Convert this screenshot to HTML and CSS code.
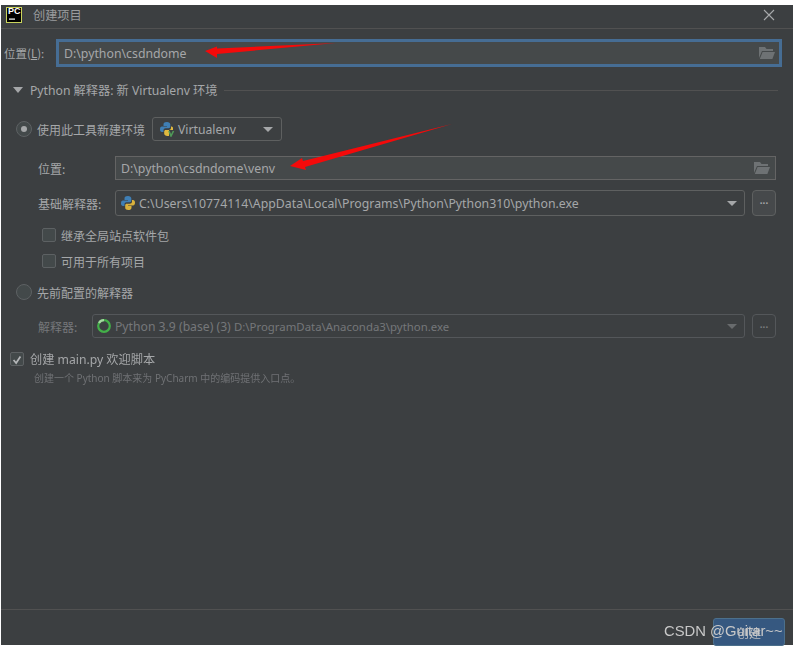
FILE: index.html
```html
<!DOCTYPE html>
<html lang="zh-CN">
  <head>
    <meta charset="UTF-8" />
    <title>创建项目</title>
    <link rel="stylesheet" href="styles.css">
  </head>
  <body>
    <div class="dialog">
      <div class="titlebar">
        <svg class="pc-logo" width="16" height="16" viewBox="0 0 16 16">
          <rect x="0.5" y="0.5" width="15" height="15" fill="#000" stroke="#c9d45c"></rect>
          <rect x="3" y="11.5" width="6" height="1.2" fill="#fff"></rect>
        </svg>
        <span class="pc-mark">PC</span>
        <span class="title">创建项目</span>
        <svg class="close" width="12" height="12" viewBox="0 0 12 12">
          <path d="M1 1 L11 11 M11 1 L1 11" stroke="#a8aaac" stroke-width="1.1" fill="none"></path>
        </svg>
      </div>

      <div class="content">
        <div class="row row-location">
          <label class="location-label">位置(<u>L</u>):</label>
          <div class="field field-focus">
            <span>D:\python\csdndome</span>
            <svg class="folder" width="16" height="13" viewBox="0 0 16 13">
              <path d="M0 0 H6 L7.5 2 H14 V4 H3 L0 11 Z" fill="#6e7274"></path>
              <path d="M3.6 5 H16 L13.4 12 H0.8 Z" fill="#6e7274"></path>
            </svg>
          </div>
        </div>

        <div class="section">
          <span class="triangle"></span>
          <span>Python 解释器: 新 Virtualenv 环境</span>
          <span class="section-line"></span>
        </div>

        <div class="row row-env">
          <span class="radio radio-on"></span>
          <span class="radio-text">使用此工具新建环境</span>
          <div class="select select-small">
            <svg class="py-icon" width="16" height="16" viewBox="0 0 16 16">
              <path d="M8 1 C5 1 4.5 2 4.5 3.5 V5 H8 V5.6 H3 C1.5 5.6 1 7 1 8.3 C1 10 1.7 11 3 11 H4.5 V9.3 C4.5 8 5.4 7.3 6.6 7.3 H9.6 C10.6 7.3 11.3 6.6 11.3 5.6 V3.3 C11.3 2 10 1 8 1 Z" fill="#3f7fb5"></path>
              <path d="M12 5.5 V7 C12 8.3 11 9 9.8 9 H6.8 C5.8 9 5.2 9.7 5.2 10.6 V12.8 C5.2 14 6.5 15 8.3 15 H10 V9 H14 V7 C14 6 13.2 5.5 12 5.5 Z" fill="#e0b93f"></path>
              <path d="M10 10 L12 15 L14.5 10" stroke="#4f9a58" stroke-width="1.6" fill="none"></path>
            </svg>
            <span>Virtualenv</span>
            <span class="arrow"></span>
          </div>
        </div>

        <div class="row row-venv">
          <label class="form-label">位置:</label>
          <div class="field field-wide">
            <span>D:\python\csdndome\venv</span>
            <svg class="folder" width="16" height="13" viewBox="0 0 16 13">
              <path d="M0 0 H6 L7.5 2 H14 V4 H3 L0 11 Z" fill="#6e7274"></path>
              <path d="M3.6 5 H16 L13.4 12 H0.8 Z" fill="#6e7274"></path>
            </svg>
          </div>
        </div>

        <div class="row row-base">
          <label class="form-label">基础解释器:</label>
          <div class="select select-grow">
            <svg class="py-icon" width="16" height="16" viewBox="0 0 16 16">
              <path d="M8 1 C5 1 4.5 2 4.5 3.5 V5 H8 V5.6 H3 C1.5 5.6 1 7 1 8.3 C1 10 1.7 11 3 11 H4.5 V9.3 C4.5 8 5.4 7.3 6.6 7.3 H9.6 C10.6 7.3 11.3 6.6 11.3 5.6 V3.3 C11.3 2 10 1 8 1 Z" fill="#3f7fb5"></path>
              <path d="M12 5 V6.7 C12 8 11 8.7 9.8 8.7 H6.8 C5.8 8.7 5.2 9.4 5.2 10.3 V12.7 C5.2 14 6.5 15 8.3 15 C10 15 11.5 14.4 11.5 12.7 V11 H8 V10.4 H13 C14.5 10.4 15 9 15 7.7 C15 6 14.3 5 13 5 Z" fill="#d9b13c"></path>
            </svg>
            <span>C:\Users\10774114\AppData\Local\Programs\Python\Python310\python.exe</span>
            <span class="arrow arrow-end"></span>
          </div>
          <div class="more">...</div>
        </div>

        <div class="row row-check-a">
          <span class="checkbox"></span>
          <span>继承全局站点软件包</span>
        </div>
        <div class="row row-check-b">
          <span class="checkbox"></span>
          <span>可用于所有项目</span>
        </div>

        <div class="row row-existing">
          <span class="radio"></span>
          <span class="radio-text">先前配置的解释器</span>
        </div>

        <div class="row row-interp">
          <label class="form-label form-label-short muted">解释器:</label>
          <div class="select select-grow select-off muted">
            <svg class="ring" width="16" height="16" viewBox="0 0 16 16">
              <circle cx="8" cy="8" r="5.8" fill="none" stroke="#43b049" stroke-width="2.2"></circle>
              <path d="M3 5 A5.8 5.8 0 0 1 8 2.2" fill="none" stroke="#a5d6a0" stroke-width="2.2"></path>
            </svg>
            <span>Python 3.9 (base) (3) <span class="path-small">D:\ProgramData\Anaconda3\python.exe</span></span>
            <span class="arrow arrow-end arrow-off"></span>
          </div>
          <div class="more more-off">...</div>
        </div>

        <div class="row row-main">
          <span class="checkbox checkbox-on">
            <svg width="14" height="14" viewBox="0 0 14 14">
              <path d="M3 7 L6 10.5 L11 3" stroke="#b4b6b8" stroke-width="2" fill="none"></path>
            </svg>
          </span>
          <span>创建 main.py 欢迎脚本</span>
        </div>
        <p class="hint">创建一个 Python 脚本来为 PyCharm 中的编码提供入口点。</p>
      </div>

      <div class="footer">
        <button class="create">创建</button>
      </div>
    </div>

    <!-- red arrows and watermark drawn over the screenshot -->
    <svg class="arrows" width="801" height="647" viewBox="0 0 801 647">
      <path d="M205 51 L217 46.5 L217 48.5 L336 43 L217 54 L217 58 Z" fill="#f40a0a"></path>
      <path d="M290 166 L302 158 L303 161 L452 124 L305 167 L306 170 Z" fill="#f40a0a"></path>
    </svg>
    <div class="watermark">CSDN @Guitar~~</div>
  </body>
</html>
```

FILE: styles.css
```css
* {
  box-sizing: border-box;
}
body {
  margin: 0;
  height: 647px;
  padding: 5px 8px 2px 1px;
  background: #fff;
  color: #a5a7a9;
  font-family: "Noto Sans CJK SC", "Noto Sans", sans-serif;
  font-size: 12px;
  overflow: hidden;
}
.dialog {
  display: flex;
  flex-direction: column;
  height: 640px;
  background: #3c3f41;
  filter: blur(0.35px);
}

/* title */
.titlebar {
  position: relative;
  display: flex;
  align-items: center;
  flex: none;
  height: 24px;
  padding: 0 18px 4px 5px;
  border-bottom: 1px solid #515151;
}
.pc-logo {
  flex: none;
}
.pc-mark {
  position: absolute;
  left: 7px;
  top: 1px;
  color: #fff;
  font: bold 9px/11px "Liberation Sans", sans-serif;
}
.title {
  margin-left: 11px;
  color: #9a9c9e;
  font-size: 12.2px;
}
.close {
  margin-left: auto;
}

/* form */
.content {
  flex: 1;
  padding: 10px 11px 0 0;
}
.row {
  display: flex;
  align-items: center;
}
.row-location {
  height: 28px;
  padding-left: 3px;
}
.location-label {
  width: 52px;
  font-size: 11.5px;
}
.field {
  display: flex;
  align-items: center;
  flex: 1;
  height: 24px;
  padding: 0 5px 0 5px;
  background: #45494a;
  border: 1px solid #646464;
  font-family: "Noto Sans", sans-serif;
  font-size: 12.3px;
}
.field-focus {
  height: 28px;
  padding-left: 5px;
  padding-right: 4px;
  border: 3px solid #466d94;
}
.field-wide {
  margin-right: 6px;
}
.folder {
  margin-left: auto;
}
.section {
  display: flex;
  align-items: center;
  height: 16px;
  margin: 15px 4px 0 12px;
  font-family: "Noto Sans", "Noto Sans CJK SC", sans-serif;
  font-size: 12.2px;
}
.triangle {
  width: 0;
  height: 0;
  margin-right: 7px;
  border-left: 5px solid transparent;
  border-right: 5px solid transparent;
  border-top: 6px solid #a5a7a9;
}
.section-line {
  flex: 1;
  height: 1px;
  margin-left: 6px;
  background: #515151;
}
.row-env {
  height: 24px;
  margin-top: 19px;
  padding-left: 15px;
}
.radio {
  position: relative;
  flex: none;
  width: 16px;
  height: 16px;
  background: #43494a;
  border: 1px solid #5d6163;
  border-radius: 50%;
}
.radio-on::after {
  content: "";
  position: absolute;
  left: 4px;
  top: 4px;
  width: 6px;
  height: 6px;
  background: #a5a7a9;
  border-radius: 50%;
}
.radio-text {
  margin-left: 5px;
}
.select {
  position: relative;
  display: flex;
  align-items: center;
  height: 24px;
  padding: 0 6px;
  background: #3c3f41;
  border: 1px solid #5e6060;
  border-radius: 3px;
  font-family: "Noto Sans", sans-serif;
  font-size: 12.2px;
}
.select-small {
  width: 130px;
  margin-left: 7px;
}
.select-grow {
  flex: 1;
  padding-left: 4px;
}
.select-off {
  padding-left: 3px;
  border-color: #54575a;
}
.py-icon,
.ring {
  flex: none;
  margin-right: 3px;
}
.arrow {
  width: 0;
  height: 0;
  margin-left: auto;
  margin-right: 2px;
  border-left: 5px solid transparent;
  border-right: 5px solid transparent;
  border-top: 5px solid #a5a7a9;
}
.arrow-end {
  margin-right: 1px;
}
.arrow-off {
  border-top-color: #686b6d;
}
.more {
  flex: none;
  width: 24px;
  height: 24px;
  margin-left: 7px;
  border: 1px solid #5e6060;
  border-radius: 4px;
  background: #46494b;
  color: #a5a7a9;
  font: bold 10px/20px "Liberation Sans", sans-serif;
  text-align: center;
}
.more-off {
  background: none;
  border-color: #54575a;
  color: #7a7c7e;
}
.muted {
  color: #75777a;
}
.path-small {
  font-size: 11.4px;
}
.form-label {
  flex: none;
  width: 77px;
}
.form-label-short {
  width: 54px;
}
.row-venv {
  height: 24px;
  margin-top: 15px;
  padding-left: 37px;
}
.row-base {
  height: 26px;
  margin-top: 10px;
  padding-right: 6px;
  padding-left: 37px;
}
.row-base .select {
  height: 26px;
  font-size: 12.3px;
}
.row-base .more {
  height: 26px;
}
.checkbox {
  flex: none;
  width: 14px;
  height: 14px;
  margin-right: 5px;
  background: #43494a;
  border: 1px solid #5d6163;
  border-radius: 2px;
}
.row-check-a,
.row-check-b {
  height: 16px;
  padding-left: 41px;
}
.row-check-a {
  margin-top: 11px;
}
.row-check-b {
  margin-top: 10px;
}
.row-existing {
  height: 16px;
  margin-top: 15px;
  padding-left: 15px;
}
.row-interp {
  height: 24px;
  margin-top: 14px;
  padding-right: 6px;
  padding-left: 37px;
}
.row-main {
  height: 16px;
  margin-top: 13px;
  padding-left: 9px;
  font-family: "Noto Sans", "Noto Sans CJK SC", sans-serif;
  font-size: 12.2px;
}
.checkbox-on {
  display: flex;
  margin-right: 6px;
}
.hint {
  margin: 5px 0 0 33px;
  color: #6f7174;
  font-family: "Noto Sans", "Noto Sans CJK SC", sans-serif;
  font-size: 10px;
  line-height: 12px;
}

/* footer */
.footer {
  display: flex;
  justify-content: flex-end;
  flex: none;
  height: 36px;
  padding: 8px 8px 0 0;
  border-top: 1px solid #515151;
}
.create {
  width: 72px;
  height: 28px;
  background: #365880;
  border: 1px solid #4c708c;
  border-radius: 3px;
  color: #bbbdbf;
  font-family: "Noto Sans CJK SC", sans-serif;
  font-size: 12px;
}

/* overlays */
.arrows {
  position: absolute;
  left: 0;
  top: 0;
  pointer-events: none;
}
.watermark {
  position: absolute;
  left: 664px;
  top: 622px;
  color: #c8c8c8;
  font-family: "Liberation Sans", sans-serif;
  font-size: 14.8px;
  line-height: 18px;
  white-space: nowrap;
}
```
